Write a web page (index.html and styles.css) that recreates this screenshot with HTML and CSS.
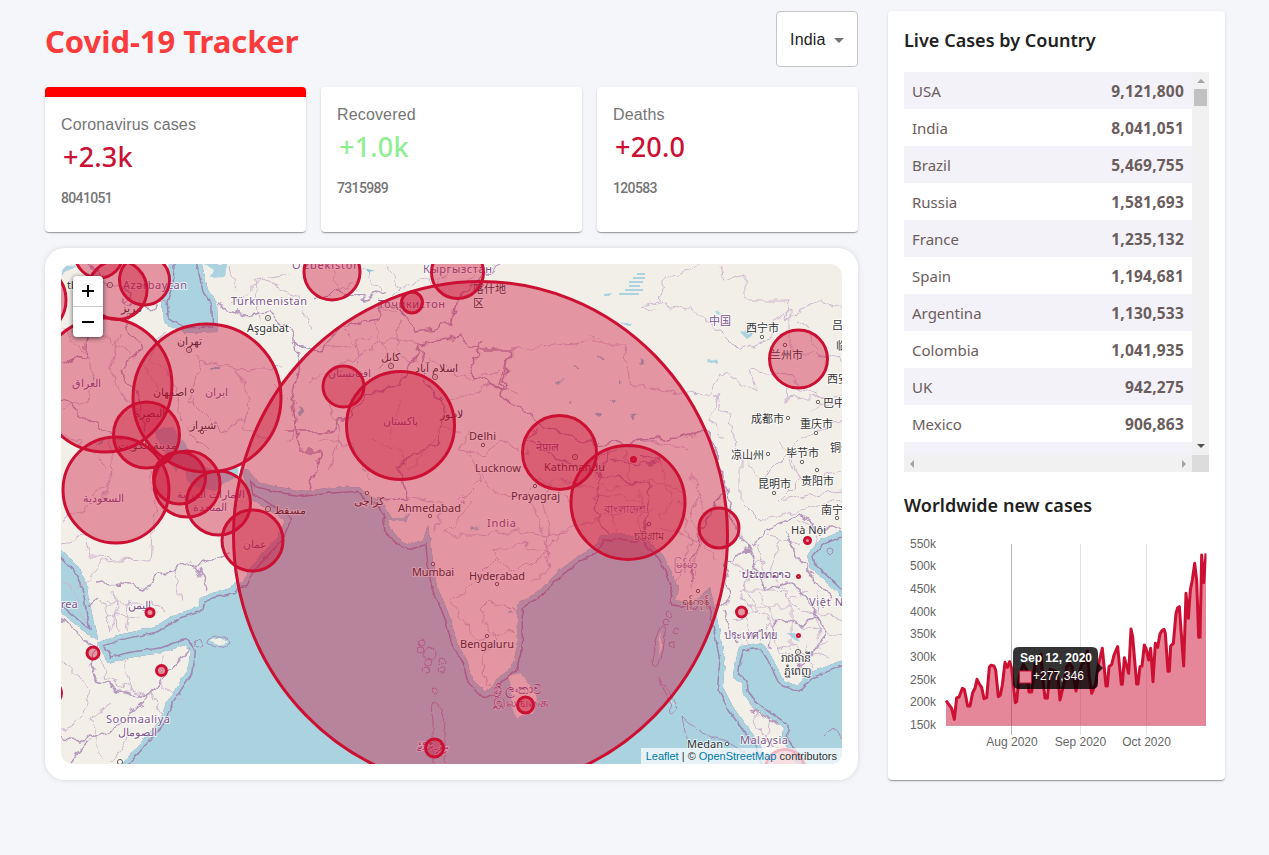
FILE: index.html
```html
<!DOCTYPE html>
<html lang="en">
<head>
<meta charset="utf-8">
<title>Covid-19 Tracker</title>
<link rel="stylesheet" href="styles.css">
</head>
<body>
<div class="app">
  <main class="app-left">
    <header class="app-header">
      <h1>Covid-19 Tracker</h1>
      <div class="select"><span>India</span><i class="caret"></i></div>
    </header>
    <section class="stats">
      <article class="card stat stat-selected"><p class="stat-title">Coronavirus cases</p><h2>+2.3k</h2><p class="stat-total">8041051</p></article>
      <article class="card stat"><p class="stat-title">Recovered</p><h2 class="green">+1.0k</h2><p class="stat-total">7315989</p></article>
      <article class="card stat"><p class="stat-title">Deaths</p><h2>+20.0</h2><p class="stat-total">120583</p></article>
    </section>
    <section class="map-card">
      <div class="map">
        <svg class="map-canvas" viewBox="61 264 781 500" width="781" height="500">
          <defs>
            <filter id="rough" x="0" y="0" width="1" height="1" color-interpolation-filters="sRGB"><feTurbulence type="fractalNoise" baseFrequency=".08" numOctaves="2" seed="4"/><feDisplacementMap in="SourceGraphic" scale="13" xChannelSelector="R" yChannelSelector="G"/></filter>
            <filter id="shore" color-interpolation-filters="sRGB"><feTurbulence type="fractalNoise" baseFrequency=".12" numOctaves="2" seed="8"/><feDisplacementMap in="SourceGraphic" scale="4" xChannelSelector="R" yChannelSelector="G"/></filter>
            <path id="sea" d="M105 800L122 764L158 723L168 700L188 670L190 652L185 645L162 653L128 658L108 663L97 643L118 635L155 627L178 613L198 607L200 598L212 593L232 588L235 582L243 582L248 570L263 553L278 537L285 520L265 507L248 497L245 480L239 468L248 470L258 482L278 487L305 491L327 488L360 486L367 495L375 498L382 503L392 518L404 518L410 513L406 521L388 521L390 528L400 540L410 544L423 540L428 525L431 543L433 563L437 587L443 600L450 617L457 643L467 660L473 680L485 692L492 688L497 678L512 667L517 647L517 605L540 590L560 570L577 557L593 548L601 536L620 533L634 537L644 530L650 543L663 555L672 573L678 588L675 600L693 603L710 587L715 610L720 633L725 660L723 687L733 707L747 727L760 743L768 766L780 800Z"/>
            <path id="gulf" d="M872 645L842 660L810 673L797 686L783 680L772 657L763 643L740 645L735 660L733 677L742 683L743 693L753 707L767 717L783 727L782 740L800 766L820 800H872Z"/>
            <path id="tonkin" d="M872 620L842 597L827 583L810 567L807 555L820 540L844 530L872 520Z"/>
            <path id="redsea" d="M41 525L61 550L78 567L88 587L92 615L98 640L82 630L61 612L41 600Z"/>
            <path id="caspian" d="M170 240L168 283L162 300L163 322L185 333L218 332L217 303L208 290L202 264L200 240Z"/>
            <path id="persian" d="M152 430L173 427L185 443L197 463L222 473L238 466L236 478L226 482L215 491L198 488L187 482L184 464L177 472L165 453Z"/>
            <g id="waters"><use href="#sea"/><use href="#gulf"/><use href="#tonkin"/><use href="#redsea"/><use href="#caspian"/></g>
            <clipPath id="wet"><use href="#sea"/><use href="#gulf"/><use href="#tonkin"/><use href="#redsea"/><use href="#caspian"/></clipPath>
          </defs>
          <rect class="land" x="61" y="264" width="781" height="500"/>
          <g filter="url(#shore)">
            <use href="#waters" class="water"/><use href="#persian" class="water"/>
            <g clip-path="url(#wet)"><use href="#waters" class="limit"/><use href="#waters" class="inshore"/></g>
            <path class="water" d="M205 264H227L225 277L211 278L214 270ZM61 264L78 266L61 274ZM740 332l8 -3 5 6-6 4zM710 317l7 2-4 3zM709 359l9 1-2 3-8-1zM620 322l12 2-3 3zM715 311l6 1-3 3zM786 633l8 7 6 2-5-9z"/>
            <g class="isle"><path d="M510 676L520 673L530 685L537 697L533 713L517 718L512 707Z"/><path d="M210 641l10-3 7 4-8 4zM660 632l3 12-4 12zM670 697l3 8-3-2z"/>
              <path class="ring" d="M655 641q6-20 9-14t-3 32q-7 14-9 3zM658 678q14 14 20 31-12 12-7-6zM682 716q20 22 42 24l23 14M682 716q4 26 10 34M433 764V720q-4-17 2-18q8 3 10 30v32M824 736l10-8 8 10"/>
              <g class="ring"><circle cx="422" cy="643" r="3"/><circle cx="421" cy="650" r="3"/><circle cx="430" cy="654" r="6"/><circle cx="428" cy="662" r="4"/><circle cx="442" cy="661" r="3"/><circle cx="442" cy="670" r="3"/><circle cx="426" cy="670" r="3"/><circle cx="435" cy="690" r="3"/><circle cx="669" cy="614" r="3"/><circle cx="666" cy="622" r="3"/><circle cx="676" cy="631" r="3"/><circle cx="672" cy="644" r="3"/><circle cx="198" cy="643" r="4"/><ellipse cx="218" cy="642" rx="11" ry="5"/><circle cx="830" cy="551" r="3"/></g></g>
          </g>
          <path class="water" d="M637 273h8v2h-8zM633 277h12v2h-12zM629 281h14v2h-14zM629 285h11v2h-11zM625 289h18v2h-18zM619 293h20v2h-20zM604 294l8-1-3 3h-5z"/>
          <g filter="url(#rough)">
            <path class="province" d="M61 330L80 345L95 370L90 400L61 410M90 330L130 350L160 390M120 330L110 370L125 400L150 420M61 430L90 450L110 470L105 500L61 520M150 470L155 500L150 560L90 558L85 535L61 545M140 560L100 562L80 590M110 437L112 480L90 495M180 340L200 360L240 370L285 368M200 360L190 400L220 430L245 420M235 370L250 400L240 430L270 440M165 330L150 360L175 380L180 420L210 450M270 380L300 410L290 440M230 305L260 280L300 295L310 330M230 264L235 290M260 320L255 280L290 275M310 380L350 360L390 340L430 345M330 400L340 430L330 470M320 440L350 445L370 480M345 330L360 350L350 380M375 320L385 350L380 370M400 320L395 350L420 365M310 350L350 345L370 335M370 440L400 450L410 470L440 430L460 430M400 400L390 440M430 360L470 380L500 370M450 400L490 385L520 395M470 430L460 450L485 455L500 440L530 455M470 500L460 520L445 535L480 535L520 530L545 535L570 530M480 470L490 490L520 500L540 480L570 500M545 535L530 500L560 480L600 490M450 600L465 590L495 560L510 570L540 560L560 530L600 520M480 610L495 640L480 660L490 690M480 610L490 600L520 610M500 560L490 550L520 545L550 555M450 600L475 640L515 630M545 540L550 570L530 580M540 500L550 520L545 560M470 455L480 480L460 500M410 495L440 505L435 535M600 440L590 470L610 490L640 480L680 490M610 510L620 540M640 490L640 530L655 545M590 460L640 440L690 450M660 460L670 500L660 520M680 500L690 540L680 580M660 530L700 540L690 590M700 490L690 520L715 560M760 560L745 590L760 610L735 620M780 540L770 570L790 600L810 590M800 520L820 530L815 545M740 590L780 590L800 610L842 620M770 620L780 650L800 660L830 640M760 640L770 620L740 600M730 560L750 570L745 590M790 600L790 650M815 590L820 650M750 650L740 590M780 645L830 660M750 700L760 730L780 750M770 720L765 740M100 650L105 680L150 695L162 715M61 660L90 690L80 720L61 730M100 760L90 720L110 705M125 660L130 690M162 655V690L185 700M130 735L110 764M61 575L80 600L85 625M100 600L110 630L120 610L105 600M130 600L125 630M150 600L165 612M180 600L175 570L195 560M100 605H145M105 618L140 615M115 590L118 628M755 545L765 570M770 535L800 545M740 570L765 575M745 605H790M800 625L842 635M805 640L812 670M760 595L775 625M590 500L620 495L645 505M600 515L655 510M625 450L630 485M690 470L705 510"/>
            <path class="province" d="M655 312L640 305L660 300L665 280L700 264M655 302L690 310L720 330L740 350L770 340L775 320L790 310L790 350L842 360M720 264L725 280L745 275L745 300L790 300L785 320L820 300L842 310M625 345L630 385L680 394L710 395L720 372L755 390L750 370L790 375L800 390L830 400M715 395L730 420L735 450L745 460L760 480L780 460L800 440L842 420M790 450L800 480L780 500L842 490M810 410L842 400M800 320L820 350M790 380L785 400L842 395M590 345L625 345M720 395L710 420L725 440M740 450L740 500L760 520L800 510L842 500M600 340L510 350M780 440L800 480L842 470M330 264L340 290L360 280M390 264L400 290L420 280L440 285L450 264M400 290L380 310L400 310M500 264L480 270L470 280M365 270L380 290"/>
            <path class="border" d="M90 264L110 285L130 290L125 320L140 350L120 370L140 400L145 430M120 300L150 310L165 300M61 365L85 355L90 325M61 400L90 420L120 440M98 598L88 605M95 585L120 583L145 590L165 570L195 565L230 554M195 565L208 592M215 305L250 316L270 312L295 335L300 370L290 400L300 450L320 450L310 490M295 345L320 350L345 325L380 320L380 300L400 310L415 330L450 325L455 300L500 264M285 430L330 430L355 410L375 390L400 385L420 345L460 335L480 350L510 350L505 390L470 375L480 340M510 350L500 395L550 430L600 445L640 440L680 438L705 430L720 455L725 490L700 530L690 570L690 580M420 345L425 380L445 410L440 440L415 455L398 465L410 498L380 500M540 430L525 440L560 460L600 475L610 450M600 475L595 510L605 535M600 475L650 485L645 530M610 460L640 465L660 460L640 455M725 480L735 530L750 550L725 560L730 600L715 610M750 545L785 520L800 515L820 530L842 528M750 550L765 590L790 580L800 590L820 620L800 625L775 620L770 650M785 530L800 560L830 600M820 620L825 640L795 670M725 610L735 640M750 710L780 725M97 643L90 665L100 682L130 693L150 695L115 728L93 735L80 740L61 738M88 740L70 764M150 694L190 650M61 620L85 640L97 650M315 300L335 290L365 300L385 290"/>
            <path class="lake" d="M600 355l5 2-4 2zM610 400l8 3-5 3zM575 365l3 2h-4zM595 412l7 2-5 4zM630 415l9 1-6 4zM640 360l4 2-4 1zM560 380l5 1-4 2zM550 345l4 2zM615 380l4 3-4 1zM590 335l4 2-5 1zM570 400l3 2-4 1zM472 525l4 2-3 4zM93 375l2 4-3 1zM100 440l3 3-5 1zM300 405l6 4-4 7-4-3zM510 610l3 2-4 1zM210 366h9v2h-9zM360 268l12 4-4 2zM605 330l3 2z"/>
          </g>
          <g class="label">
            <g class="country"><text x="123" y="289" textLength="64">Azərbaycan</text><text x="231" y="305" textLength="76">Türkmenistan</text><text x="292" y="269" textLength="68">Oʻzbekiston</text><text x="423" y="273" textLength="69">Кыргызстан</text><text x="378" y="308" textLength="67">Тоҷикистон</text><text x="72" y="387">العراق</text><text x="205" y="396">ایران</text><text x="328" y="377">افغانستان</text><text x="383" y="425">پاکستان</text><text x="83" y="502">السعودية</text><text x="177" y="498">الإمارات العربية</text><text x="193" y="511">المتحدة</text><text x="243" y="548">عمان</text><text x="536" y="451">नेपाल</text><text x="487" y="527" textLength="29">India</text><text x="604" y="513">বাংলাদেশ</text><text x="674" y="568">မြန်မာ</text><text x="742" y="578" textLength="49">ປະເທດລາວ</text><text x="724" y="639" textLength="53">ประเทศไทย</text><text x="809" y="606" textLength="52">Việt Nam</text><text x="740" y="744" textLength="48">Malaysia</text><text x="106" y="723" textLength="64">Soomaaliya</text><text x="118" y="736">الصومال</text><text x="61" y="608">rea</text><text x="709" y="325">中国</text><text class="wide" x="493" y="694">ශ්‍රී ලංකාව</text><text class="wide" x="493" y="707">இலங்கை</text><text x="417" y="751">ދިވެހިރާއްޖެ</text><text x="128" y="609">اليمن</text></g>
            <g><text x="67" y="289">tbi</text><text x="247" y="332" textLength="42">Aşgabat</text><text x="177" y="345">تهران</text><text x="121" y="312">تبریز</text><text x="153" y="396">اصفهان</text><text x="134" y="417">البصرة</text><text x="190" y="429">شیراز</text><text x="118" y="449">مدينة الكويت</text><text x="381" y="361">کابل</text><text x="415" y="372">اسلام آباد</text><text x="440" y="418">لاہور</text><text x="354" y="505">کراچی</text><text x="274" y="514">مسقط</text><text x="469" y="440" textLength="27">Delhi</text><text x="475" y="472" textLength="46">Lucknow</text><text x="544" y="471" textLength="61">Kathmandu</text><text x="511" y="500" textLength="49">Prayagraj</text><text x="398" y="512" textLength="63">Ahmedabad</text><text x="412" y="576" textLength="42">Mumbai</text><text x="469" y="580" textLength="56">Hyderabad</text><text x="460" y="648" textLength="54">Bengaluru</text><text x="634" y="540">চট্টগ্রাম</text><text x="682" y="605">ရန်ကုန်</text><text x="791" y="534" textLength="35">Hà Nội</text><text x="781" y="662">រាជធានី</text><text x="784" y="675">ភ្នំពេញ</text><text x="687" y="748" textLength="36">Medan</text><text x="473" y="293">喀什地</text><text x="473" y="307">区</text><text x="746" y="332">西宁市</text><text x="770" y="359">兰州市</text><text x="832" y="329">吕梁</text><text x="836" y="350">临汾</text><text x="827" y="383">西安市</text><text x="823" y="407">巴中市</text><text x="751" y="423">成都市</text><text x="800" y="428">重庆市</text><text x="731" y="459">凉山州</text><text x="786" y="457">毕节市</text><text x="830" y="452">铜仁市</text><text x="758" y="488">昆明市</text><text x="801" y="485">贵阳市</text><text x="821" y="514">南宁市</text></g>
          </g>
          <g class="town"><circle cx="762" cy="337" r="1.7"/><circle cx="785" cy="345" r="1.7"/><circle cx="818" cy="402" r="1.7"/><circle cx="788" cy="418" r="1.7"/><circle cx="816" cy="433" r="1.7"/><circle cx="768" cy="454" r="1.7"/><circle cx="802" cy="462" r="1.7"/><circle cx="817" cy="470" r="1.7"/><circle cx="774" cy="493" r="1.7"/><circle cx="837" cy="518" r="1.7"/><circle cx="483" cy="445" r="1.7"/><circle cx="535" cy="486" r="1.7"/><circle cx="430" cy="516" r="1.7"/><circle cx="433" cy="564" r="1.7"/><circle cx="497" cy="584" r="1.7"/><circle cx="487" cy="636" r="1.7"/><circle cx="367" cy="493" r="1.7"/><circle cx="192" cy="391" r="1.7"/><circle cx="148" cy="420" r="1.7"/><circle cx="727" cy="744" r="1.7"/><circle cx="649" cy="524" r="1.7"/><circle cx="698" cy="591" r="1.7"/><circle cx="202" cy="432" r="1.7"/></g>
          <g class="town"><circle cx="110" cy="285" r="2.6"/><circle cx="268" cy="318" r="2.6"/><circle cx="189" cy="350" r="2.6"/><circle cx="391" cy="366" r="2.6"/><circle cx="435" cy="377" r="2.6"/><circle cx="268" cy="509" r="2.6"/><circle cx="575" cy="457" r="2.6"/><circle cx="798" cy="652" r="2.6"/><circle cx="120" cy="762" r="2.6"/><path d="M109.500 285h1M267.500 318h1M188.500 350h1M390.500 366h1M434.500 377h1M267.500 509h1M574.500 457h1M797.500 652h1"/></g>
          <g class="cases">
            <ellipse cx="480.500" cy="535.500" rx="247" ry="254"/><circle cx="207" cy="398" r="74"/><circle cx="105" cy="385" r="67"/><circle cx="116" cy="490" r="53"/><circle cx="146.500" cy="435" r="33"/><circle cx="179.500" cy="478" r="26"/><circle cx="187" cy="484" r="33"/><circle cx="218.500" cy="503" r="32"/><circle cx="252.500" cy="540.500" r="30.500"/><circle cx="343.500" cy="386.500" r="20.500"/><circle cx="400.500" cy="425.500" r="54"/><circle cx="559.500" cy="452.500" r="37"/><circle cx="628" cy="502.500" r="57"/><circle cx="633.500" cy="459.500" r="2"/><circle cx="719" cy="528" r="20"/><circle cx="798.500" cy="359" r="29"/><circle cx="332" cy="272" r="28"/><circle cx="457.500" cy="272.500" r="26"/><circle cx="412" cy="302.500" r="10.500"/><circle cx="144.500" cy="280" r="25"/><circle cx="117.500" cy="290" r="29.500"/><circle cx="99" cy="254" r="24"/><circle cx="30" cy="300" r="36"/><circle cx="150" cy="612.500" r="4"/><circle cx="93" cy="653" r="6"/><circle cx="161.500" cy="670.500" r="5"/><circle cx="50" cy="693" r="11.500"/><circle cx="434.500" cy="748" r="9"/><circle cx="525.500" cy="705" r="8"/><circle cx="741.500" cy="612" r="5"/><circle cx="807.500" cy="540.500" r="3"/><circle cx="798.500" cy="576.500" r="1"/><circle cx="798.500" cy="635.500" r="1"/><circle cx="785" cy="769" r="19.500"/>
          </g>
        </svg>
        <div class="zoom-control"><button><svg width="12" height="12"><path d="M0 6H12M6 0V12"/></svg></button><button><svg width="12" height="12"><path d="M0 6H12"/></svg></button></div>
        <div class="attribution"><a>Leaflet</a> | © <a>OpenStreetMap</a> contributors</div>
      </div>
    </section>
  </main>
  <aside class="card app-right">
    <h3>Live Cases by Country</h3>
    <div class="table">
      <div class="rows">
        <div class="row"><span>USA</span><b>9,121,800</b></div>
        <div class="row"><span>India</span><b>8,041,051</b></div>
        <div class="row"><span>Brazil</span><b>5,469,755</b></div>
        <div class="row"><span>Russia</span><b>1,581,693</b></div>
        <div class="row"><span>France</span><b>1,235,132</b></div>
        <div class="row"><span>Spain</span><b>1,194,681</b></div>
        <div class="row"><span>Argentina</span><b>1,130,533</b></div>
        <div class="row"><span>Colombia</span><b>1,041,935</b></div>
        <div class="row"><span>UK</span><b>942,275</b></div>
        <div class="row"><span>Mexico</span><b>906,863</b></div>
        <div class="row"></div>
      </div>
      <div class="vbar"><i class="tri up"></i><i class="thumb"></i><i class="tri down"></i></div>
      <div class="hbar"><i class="tri left"></i><i class="tri right"></i></div>
      <div class="corner"></div>
    </div>
    <h3 class="chart-title">Worldwide new cases</h3>
    <svg class="chart" viewBox="904 530 305 225" width="305" height="225">
      <g class="ticks" text-anchor="end"><text x="936" y="548">550k</text><text x="936" y="570">500k</text><text x="936" y="593">450k</text><text x="936" y="616">400k</text><text x="936" y="638">350k</text><text x="936" y="661">300k</text><text x="936" y="684">250k</text><text x="936" y="706">200k</text><text x="936" y="729">150k</text></g>
      <g class="ticks" text-anchor="middle"><text x="1012" y="746">Aug 2020</text><text x="1080.500" y="746">Sep 2020</text><text x="1146.500" y="746">Oct 2020</text></g>
      <path class="grid" d="M1080.500 544V735M1146.500 544V735M946 725.500H1206"/><path class="grid first" d="M1011.500 544V735"/>
      <svg x="885" y="553" width="321.500" height="173" viewBox="0 369 964.500 519">
        <path class="area" d="M183 887V812L200 835L208 868L215 803L222 802L232 775L238 778L248 828L255 828L263 788L270 775L276 748L283 762L290 772L297 806L305 803L313 712L318 706L327 708L332 720L340 800L346 795L352 765L360 697L367 712L374 695L380 715L391 818L395 815L402 740L415 703L425 720L432 786L440 786L450 700L460 690L468 672L475 760L480 804L487 805L495 718L510 722L518 730L525 810L537 760L545 710L553 700L562 710L573 783L582 730L590 705L600 690L607 663L613 740L620 790L632 760L640 705L652 655L663 768L667 768L672 710L680 704L687 675L698 650L709 763L712 763L718 683L731 730L738 597L743 620L755 762L759 762L765 710L771 708L778 645L783 655L791 690L797 655L804 755L811 640L818 652L825 612L830 603L837 598L841 610L849 724L853 724L857 648L865 640L873 550L878 533L883 530L896 708L903 490L910 565L916 480L922 450L929 400L935 450L941 622L945 622L950 375L956 458L963 370V887Z"/>
        <path class="curve" d="M183 812L200 835L208 868L215 803L222 802L232 775L238 778L248 828L255 828L263 788L270 775L276 748L283 762L290 772L297 806L305 803L313 712L318 706L327 708L332 720L340 800L346 795L352 765L360 697L367 712L374 695L380 715L391 818L395 815L402 740L415 703L425 720L432 786L440 786L450 700L460 690L468 672L475 760L480 804L487 805L495 718L510 722L518 730L525 810L537 760L545 710L553 700L562 710L573 783L582 730L590 705L600 690L607 663L613 740L620 790L632 760L640 705L652 655L663 768L667 768L672 710L680 704L687 675L698 650L709 763L712 763L718 683L731 730L738 597L743 620L755 762L759 762L765 710L771 708L778 645L783 655L791 690L797 655L804 755L811 640L818 652L825 612L830 603L837 598L841 610L849 724L853 724L857 648L865 640L873 550L878 533L883 530L896 708L903 490L910 565L916 480L922 450L929 400L935 450L941 622L945 622L950 375L956 458L963 370"/>
      </svg>
      <path class="tip" d="M1019 647H1092Q1098 647 1098 653V663L1103 668L1098 673V683Q1098 689 1092 689H1019Q1013 689 1013 683V653Q1013 647 1019 647Z"/>
      <rect class="swatch" x="1019.500" y="671" width="12" height="12"/>
      <text class="tip-text" x="1020" y="662" textLength="72">Sep 12, 2020</text><text class="tip-text value" x="1033" y="680" textLength="51">+277,346</text>
    </svg>
  </aside>
</div>
</body>
</html>
```
FILE: styles.css
```css
* { box-sizing: border-box; }
body { margin: 0; height: 855px; overflow: hidden; background: #f5f6fa; font-family: "Noto Sans", "Noto Sans CJK SC", sans-serif; }
h1, h2, h3, p { margin: 0; }
.app { display: flex; gap: 30px; padding: 11px 44px 0 45px; }
.app-left { width: 813px; }
.app-header { display: flex; justify-content: space-between; height: 56px; margin-bottom: 20px; }
h1 { font-size: 31px; line-height: 60px; letter-spacing: -.05px; color: #fc3c3c; font-weight: 700; }
.select { width: 82px; height: 56px; border: 1px solid #c4c4c4; border-radius: 4px; background: #fff; display: flex; align-items: center; gap: 8px; padding: 2px 0 0 13px; font: 16px "Liberation Sans", sans-serif; letter-spacing: .2px; color: #222; }
.caret { border: 5px solid transparent; border-top-color: #757575; border-bottom: 0; }
.card { background: #fff; border-radius: 4px; box-shadow: 0 2px 1px -1px rgba(0,0,0,.2), 0 1px 1px rgba(0,0,0,.14), 0 1px 3px rgba(0,0,0,.12); }
.stats { display: grid; grid-template-columns: repeat(3, 261px); gap: 15px; margin-bottom: 16px; }
.stat { height: 145px; padding: 16px; }
.stat-selected { border-top: 10px solid red; }
.stat-title { font: 16px/24px "Liberation Sans", sans-serif; letter-spacing: .15px; color: #757575; }
.stat h2 { margin: 0 0 13px 2px; font-size: 27px; line-height: 39px; font-weight: 500; letter-spacing: .2px; color: #cc1034; }
.stat h2.green { color: lightgreen; }
.stat-total { font: 500 14px/18px Roboto, sans-serif; letter-spacing: -.65px; color: #757575; }
.map-card { height: 532px; padding: 16px; background: #fff; border-radius: 20px; box-shadow: 0 0 8px -4px rgba(0,0,0,.4); }
.map { position: relative; height: 500px; border-radius: 12px; overflow: hidden; }
.map-canvas { display: block; }
.land { fill: #f2efe9; }
.water { fill: #aad3df; }
.limit, .inshore { fill: none; stroke: #9c86b2; stroke-width: 12; stroke-linejoin: round; }
.inshore { stroke: #aad3df; stroke-width: 9; }
.isle { fill: #f2efe9; }
.ring { fill: none; stroke: #a58bb4; stroke-width: 1; }
.province { fill: none; stroke: #cdb6cf; stroke-width: 1; stroke-linejoin: round; }
.border { fill: none; stroke: #b597bb; stroke-width: 1.500; stroke-linejoin: round; }
.lake { fill: #8fc0d2; }
.label { font-size: 11px; fill: #333; stroke: #fff; stroke-opacity: .7; stroke-width: 2px; paint-order: stroke; stroke-linejoin: round; }
.country { fill: #80568b; }
.wide { font-size: 13px; stroke-width: 1px; }
.town { fill: #f5f2ee; stroke: #555; stroke-width: .9; }
.cases { fill: #cc1034; fill-opacity: .4; stroke: #cc1034; stroke-width: 3; }
.zoom-control { position: absolute; left: 12px; top: 12px; width: 30px; background: #fff; border-radius: 4px; box-shadow: 0 1px 5px rgba(0,0,0,.65); }
.zoom-control button { display: flex; align-items: center; justify-content: center; width: 30px; height: 31px; padding: 0; border: 0; border-bottom: 1px solid #ccc; background: none; }
.zoom-control button:last-child { border: 0; height: 30px; }
.zoom-control path { stroke: #000; stroke-width: 2; }
.attribution { position: absolute; right: 0; bottom: 0; padding: 0 5px; background: rgba(255,255,255,.7); color: #333; font: 11px/16px "Liberation Sans", sans-serif; }
.attribution a { color: #0078a8; }
.app-right { width: 337px; height: 769px; padding: 16px; }
h3 { font-size: 18px; line-height: 27px; font-weight: 600; letter-spacing: .03px; color: #212121; }
.table { display: grid; grid-template: 383px 17px / 288px 17px; margin-top: 18px; }
.rows { overflow: hidden; }
.row { height: 37px; display: flex; justify-content: space-between; align-items: center; padding: 0 8px; font-size: 15px; color: #6a5d5d; }
.row b { font-size: 15.500px; font-weight: 700; letter-spacing: .2px; }
.row:nth-child(odd) { background: #f3f2f8; }
.vbar, .hbar { background: #f1f1f1; display: flex; align-items: center; }
.vbar { flex-direction: column; padding: 7px 0; }
.hbar { justify-content: space-between; padding: 0 6px; }
.corner { background: #dcdcdc; }
.thumb { width: 13px; height: 17px; margin-top: 6px; background: #c1c1c1; }
.tri { border: 4px solid transparent; }
.up { border-bottom-color: #a3a3a3; border-top: 0; }
.down { border-top-color: #505050; border-bottom: 0; margin-top: auto; }
.left { border-right-color: #a3a3a3; border-left: 0; }
.right { border-left-color: #a3a3a3; border-right: 0; }
.chart-title { margin-top: 20px; }
.chart { display: block; margin-top: 11px; }
.ticks { font: 12px "Liberation Sans", sans-serif; fill: #666; }
.grid { fill: none; stroke: #e2e2e2; }
.first { stroke: #b8b8b8; }
.area { fill: #cc1034; fill-opacity: .5; }
.curve { fill: none; stroke: #cc1034; stroke-width: 9; stroke-linejoin: round; }
.tip { fill: rgba(0,0,0,.8); }
.swatch { fill: #e5879a; stroke: #cc1034; }
.tip-text { font: bold 12px "Liberation Sans", sans-serif; fill: #fff; }
.value { font-weight: 400; }
```
